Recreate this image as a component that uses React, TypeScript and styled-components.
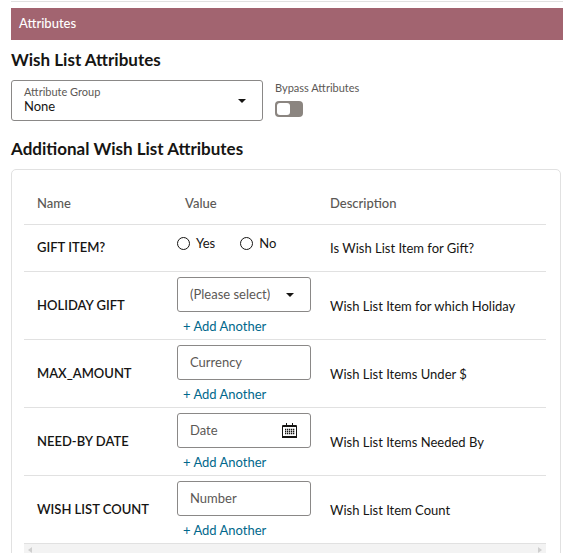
import React from "react";
import styled, { createGlobalStyle, css } from "styled-components";

const ink = "#161513";
const muted = "#5b5855";
const line = "#e1e1e1";
const outline = "#8a8887";
const link = "#00688c";

const GlobalStyle = createGlobalStyle`
  *, *::before, *::after { box-sizing: border-box; }
  body {
    margin: 0;
    background: #fff;
    color: ${ink};
    font-family: Lato, "Noto Sans", sans-serif;
    font-size: 13px;
    line-height: 18px;
  }
  input, select, button { font: inherit; color: inherit; }
`;

const Page = styled.main`
  height: 100vh;
  overflow: hidden;
  padding: 1px 0 0 11px;
`;

const Banner = styled.header`
  border-top: 1px solid ${line};
  padding-top: 6px;
`;

const BannerTitle = styled.h1`
  margin: 0;
  padding: 6px 8px 8px;
  background: #a26470;
  color: #fff;
  font-size: 13px;
  line-height: 18px;
  font-weight: 500;
`;

const Heading = styled.h2`
  margin: 8px 0;
  font-size: 17px;
  line-height: 24px;
  font-weight: 700;
`;

const Filters = styled.div`
  display: flex;
  align-items: flex-start;
  gap: 12px;
  margin-bottom: 16px;
`;

const boxed = css`
  width: 100%;
  min-width: 0;
  margin: 0;
  border: 1px solid ${outline};
  border-radius: 3px;
  background: transparent;
  appearance: none;
  outline-offset: 1px;
`;

const Overlap = styled.div<{ $width: string }>`
  display: grid;
  width: ${(p) => p.$width};
  align-items: center;
  > * { grid-area: 1 / 1; }
`;

const FloatingLabel = styled.label`
  align-self: start;
  padding: 4px 13px 0;
  color: ${muted};
  font-size: 11px;
  line-height: 16px;
`;

const GroupSelect = styled.select`
  ${boxed}
  height: 41px;
  padding: 11px 36px 0 12px;
`;

const ValueSelect = styled.select`
  ${boxed}
  height: 35px;
  padding: 0 40px 2px 12px;
  color: ${muted};
`;

const TextField = styled.input`
  ${boxed}
  height: 35px;
  padding: 0 12px 2px;
  &::placeholder { color: ${muted}; opacity: 1; }
`;

const Caret = styled.svg`
  justify-self: end;
  width: 8px;
  height: 4px;
  margin-right: 17px;
  pointer-events: none;
`;

const IconButton = styled.button`
  justify-self: end;
  display: flex;
  margin-right: 14px;
  padding: 0;
  border: 0;
  background: none;
`;

const SwitchField = styled.div`
  display: flex;
  flex-direction: column;
  align-items: flex-start;
  gap: 6px;
`;

const SwitchLabel = styled.label`
  color: ${muted};
  font-size: 11px;
  line-height: 15px;
`;

const Switch = styled.input`
  appearance: none;
  display: flex;
  width: 28px;
  height: 16px;
  margin: 0;
  padding: 2px;
  border-radius: 4px;
  background: #8b8580;
  &::before {
    content: "";
    width: 13px;
    height: 12px;
    border-radius: 3px;
    background: #fff;
  }
  &:checked { justify-content: flex-end; background: #508223; }
`;

const Card = styled.section`
  margin-right: 2px;
  padding: 12px 14px 13px 12px;
  border: 1px solid ${line};
  border-radius: 5px;
`;

const Table = styled.table`
  width: 100%;
  table-layout: fixed;
  border-collapse: separate;
  border-spacing: 0;
  text-align: left;
`;

const HeadCell = styled.th<{ $width?: string; $indent?: boolean }>`
  width: ${(p) => p.$width ?? "auto"};
  height: 43px;
  padding: 0 0 1px ${(p) => (p.$indent ? "21px" : "13px")};
  border-bottom: 1px solid ${line};
  color: ${muted};
  font-weight: 500;
`;

const NameCell = styled.th`
  padding: 0 0 2px 13px;
  border-bottom: 1px solid ${line};
  font-weight: 600;
`;

const Cell = styled.td`
  padding: 0 0 0 13px;
  border-bottom: 1px solid ${line};
  white-space: nowrap;
`;

const Choices = styled.div`
  display: flex;
  gap: 25px;
  padding: 9px 0 19px;
`;

const Choice = styled.label`
  display: flex;
  align-items: center;
  gap: 6px;
`;

const Radio = styled.input`
  appearance: none;
  width: 13px;
  height: 13px;
  margin: 0;
  border: 1px solid ${ink};
  border-radius: 50%;
  &:checked { border-width: 4px; }
`;

const Stack = styled.div`
  display: flex;
  flex-direction: column;
  align-items: flex-start;
  gap: 5px;
  padding: 5px 0 4px;
`;

const AddButton = styled.button`
  margin: 0 6px;
  padding: 0;
  border: 0;
  background: none;
  color: ${link};
  line-height: 18px;
`;

const ScrollTrack = styled.div`
  display: flex;
  align-items: center;
  justify-content: space-between;
  height: 12px;
  padding: 0 4px;
  background: #f3f3f3;
`;

const CalendarIcon = () => (
  <svg width="15" height="15" viewBox="0 0 15 15" aria-hidden="true">
    <path d="M.5 2.5h14v12H.5zM4.5 0v4M10.5 0v4" fill="none" stroke={ink} />
    <path d="M1 3h13M0 14h15" stroke={ink} strokeWidth="2" />
    <path
      d="M3 6.5h10M3 8.5h10M3 10.5h10"
      stroke={ink}
      strokeWidth="1.3"
      strokeDasharray="1.3 .7"
    />
  </svg>
);

const DownCaret = () => (
  <Caret viewBox="0 0 8 4" aria-hidden="true">
    <path d="M0 0h8L4 4z" fill={ink} />
  </Caret>
);

type Kind = "choice" | "select" | "text" | "date";

const rows: { name: string; kind: Kind; hint: string; description: string }[] = [
  { name: "GIFT ITEM?", kind: "choice", hint: "", description: "Is Wish List Item for Gift?" },
  { name: "HOLIDAY GIFT", kind: "select", hint: "(Please select)", description: "Wish List Item for which Holiday" },
  { name: "MAX_AMOUNT", kind: "text", hint: "Currency", description: "Wish List Items Under $" },
  { name: "NEED-BY DATE", kind: "date", hint: "Date", description: "Wish List Items Needed By" },
  { name: "WISH LIST COUNT", kind: "text", hint: "Number", description: "Wish List Item Count" },
];

function ValueEditor({ name, kind, hint }: { name: string; kind: Kind; hint: string }) {
  if (kind === "choice") {
    return (
      <Choices role="radiogroup" aria-label={name}>
        {["Yes", "No"].map((option) => (
          <Choice key={option}>
            <Radio type="radio" name="gift-item" value={option} />
            {option}
          </Choice>
        ))}
      </Choices>
    );
  }
  return (
    <Stack>
      <Overlap $width="134px">
        {kind === "select" ? (
          <>
            <ValueSelect aria-label={name}>
              <option>{hint}</option>
            </ValueSelect>
            <DownCaret />
          </>
        ) : (
          <TextField type="text" placeholder={hint} aria-label={name} />
        )}
        {kind === "date" && (
          <IconButton type="button" aria-label="Select date">
            <CalendarIcon />
          </IconButton>
        )}
      </Overlap>
      <AddButton type="button">+ Add Another</AddButton>
    </Stack>
  );
}

export default function App() {
  return (
    <>
      <GlobalStyle />
      <Page>
        <Banner>
          <BannerTitle>Attributes</BannerTitle>
        </Banner>
        <Heading>Wish List Attributes</Heading>
        <Filters>
          <Overlap $width="252px">
            <FloatingLabel htmlFor="attribute-group">Attribute Group</FloatingLabel>
            <GroupSelect id="attribute-group">
              <option>None</option>
            </GroupSelect>
            <DownCaret />
          </Overlap>
          <SwitchField>
            <SwitchLabel htmlFor="bypass">Bypass Attributes</SwitchLabel>
            <Switch id="bypass" type="checkbox" role="switch" />
          </SwitchField>
        </Filters>
        <Heading>Additional Wish List Attributes</Heading>
        <Card>
          <Table>
            <thead>
              <tr>
                <HeadCell scope="col" $width="140px">Name</HeadCell>
                <HeadCell scope="col" $width="153px" $indent>Value</HeadCell>
                <HeadCell scope="col">Description</HeadCell>
              </tr>
            </thead>
            <tbody>
              {rows.map((row) => (
                <tr key={row.name}>
                  <NameCell scope="row">{row.name}</NameCell>
                  <Cell>
                    <ValueEditor name={row.name} kind={row.kind} hint={row.hint} />
                  </Cell>
                  <Cell>{row.description}</Cell>
                </tr>
              ))}
            </tbody>
          </Table>
          <ScrollTrack aria-hidden="true">
            <svg width="4" height="6" viewBox="0 0 4 6"><path d="M4 0v6L0 3z" fill="#cfcfcf" /></svg>
            <svg width="4" height="6" viewBox="0 0 4 6"><path d="M0 0v6l4-3z" fill="#cfcfcf" /></svg>
          </ScrollTrack>
        </Card>
      </Page>
    </>
  );
}
